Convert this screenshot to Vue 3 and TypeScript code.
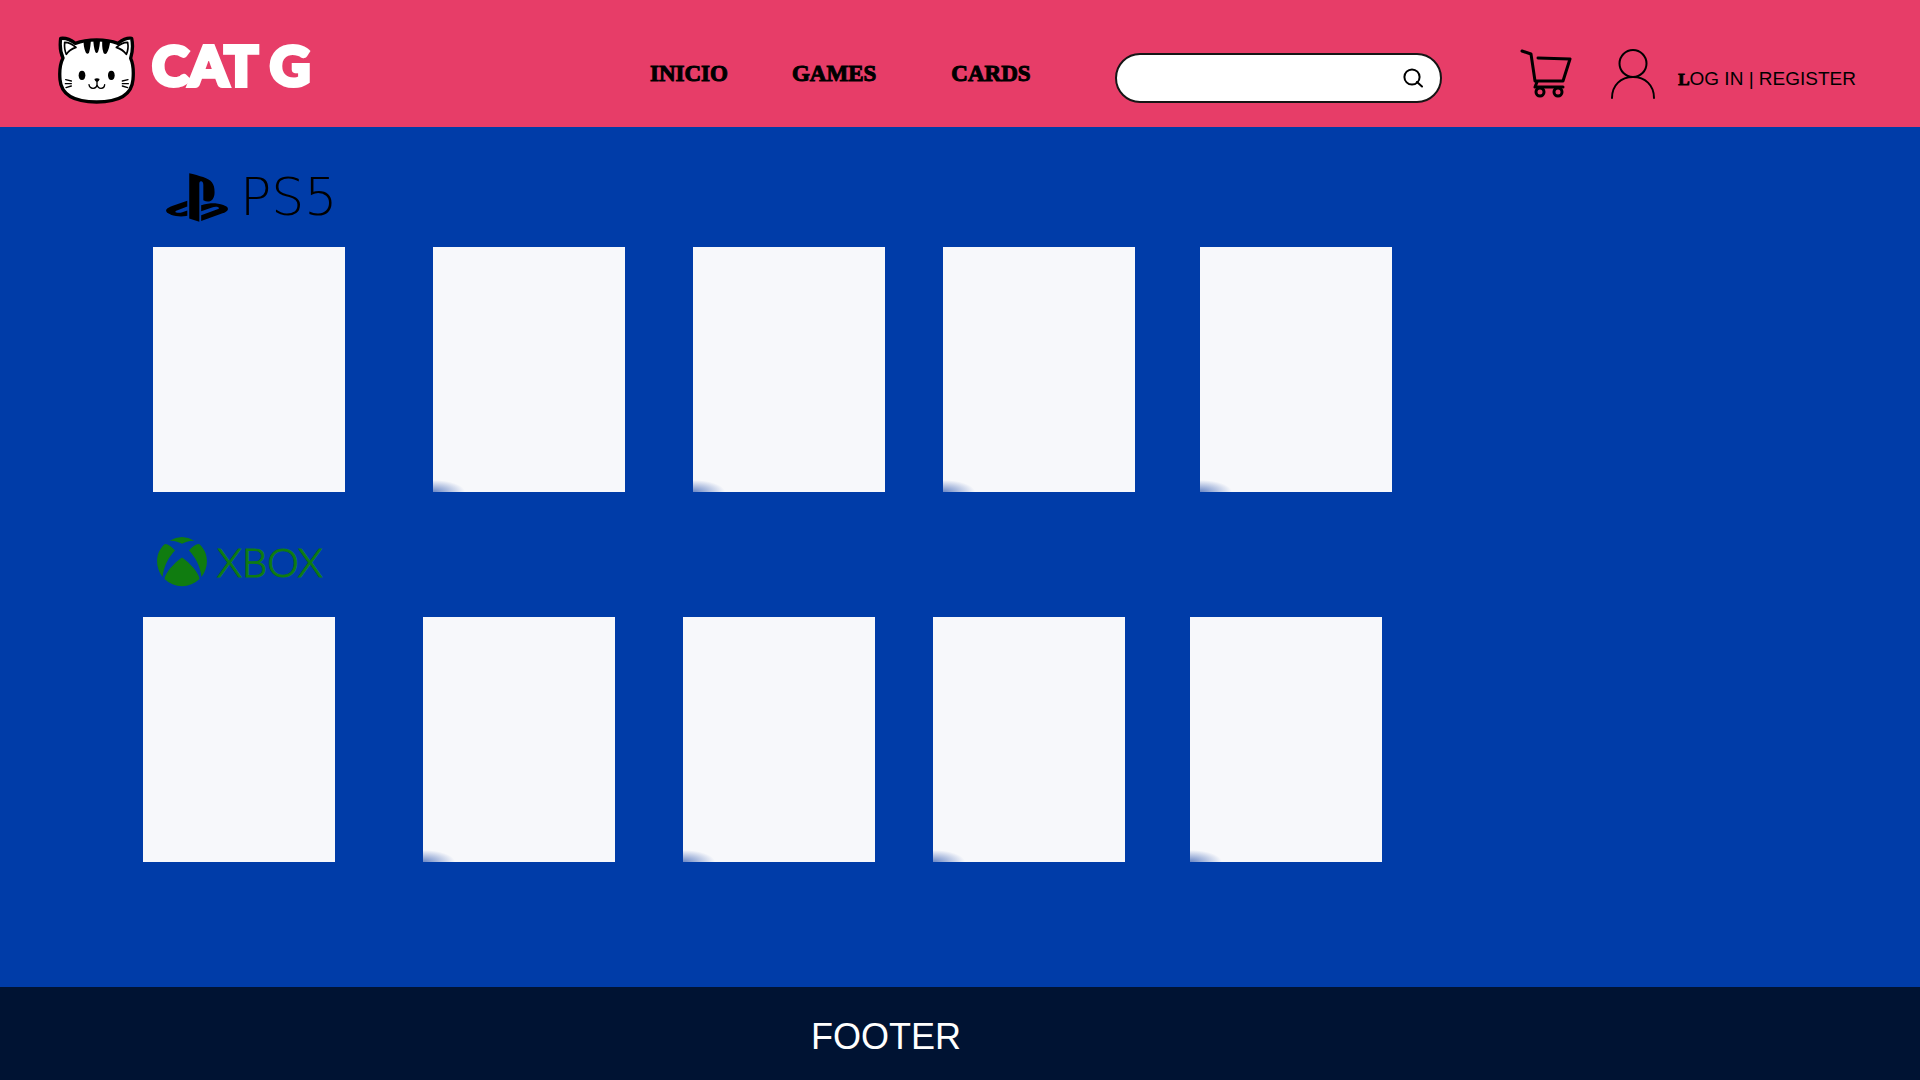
<script setup lang="ts">
import { ref } from 'vue'

interface Shelf {
  id: string
  label: string
  games: number[]
}

const query = ref('')
const links: string[] = ['INICIO', 'GAMES', 'CARDS']
const shelves: Shelf[] = [
  { id: 'ps5', label: 'PS5', games: [1, 2, 3, 4, 5] },
  { id: 'xbox', label: 'XBOX', games: [1, 2, 3, 4, 5] },
]
</script>

<template>
  <div class="page">
    <header class="header">
      <a class="brand" href="#">
        <svg class="cat" viewBox="24 32 234 210" aria-hidden="true">
          <path d="M32 39C48 37 62 43 76 54C112 40 168 40 204 54C218 43 232 37 245 39C250 62 247 82 242 99C249 114 251 140 249 163C245 212 200 230 140 230C80 230 34 212 30 163C28 140 31 114 39 98C31 82 29 62 32 39Z" fill="#fff" stroke="#000" stroke-width="10" stroke-linejoin="round" />
          <path d="M44 51C57 51 68 57 78 66C65 70 55 77 49 87C44 76 43 62 44 51ZM233 51C220 51 209 57 199 66C212 70 222 77 229 87C234 76 235 62 233 51Z" fill="#fff" stroke="#000" stroke-width="5" stroke-linejoin="round" />
          <path d="M101 44L123 42C122 56 121 70 117 82C114 87 109 86 107 81C102 69 100 56 101 44ZM130 42H150C150 56 148 70 144 80C141 84 138 84 136 80C132 70 130 56 130 42ZM157 42L181 46C179 60 176 75 170 84C166 88 161 86 160 81C156 69 156 56 157 42Z" />
          <ellipse cx="96" cy="150" rx="10" ry="14" />
          <ellipse cx="184" cy="150" rx="10" ry="14" />
          <path d="M133 161Q141 157 149 161Q147 168 141 170Q135 168 133 161Z" />
          <path d="M141 168V178M117 178C119 192 139 193 141 178C144 193 163 192 164 178M47 163L64 167M46 175H64M48 187L64 182M234 163L217 167M235 175H217M233 187L217 182" fill="none" stroke="#000" stroke-width="4" stroke-linecap="round" />
        </svg>
        <span class="wordmark">CAT G</span>
      </a>

      <nav class="nav">
        <a v-for="link in links" :key="link" href="#">{{ link }}</a>
      </nav>

      <form class="search" role="search" @submit.prevent>
        <input v-model="query" type="search" aria-label="Search" />
        <button type="submit" aria-label="Search">
          <svg viewBox="0 0 20 20" aria-hidden="true">
            <circle cx="9" cy="9" r="7.6" />
            <path d="M14 14L19 18.5" />
          </svg>
        </button>
      </form>

      <a class="cart" href="#" aria-label="Cart">
        <svg viewBox="0 0 52 50" aria-hidden="true">
          <path d="M2 2L11 5L15 32H43L50 10L18 9M17 33L15 38H43" />
          <circle cx="20" cy="43" r="4" />
          <circle cx="38" cy="43" r="4" />
        </svg>
      </a>
      <a class="user" href="#" aria-label="Account">
        <svg viewBox="0 0 44 50" aria-hidden="true">
          <circle cx="22" cy="14.5" r="13.5" />
          <path d="M1 49C1 36 10 28 22 28S43 36 43 49" />
        </svg>
      </a>
      <a class="login" href="#"><span class="initial">L</span>OG IN | REGISTER</a>
    </header>

    <main class="main">
      <section v-for="shelf in shelves" :key="shelf.id" class="shelf" :class="shelf.id">
        <h2 class="platform">
          <svg v-if="shelf.id === 'ps5'" viewBox="0 2.5 24 19" aria-hidden="true">
            <path d="M8.984 2.596v17.547l3.915 1.261V6.688c0-.69.304-1.151.794-.991.636.18.76.814.76 1.505v5.875c2.441 1.193 4.362-.002 4.362-3.152 0-3.237-1.126-4.675-4.438-5.827-1.307-.448-3.728-1.186-5.39-1.502zm4.656 16.241l6.296-2.275c.715-.258.826-.625.246-.818-.586-.192-1.637-.139-2.357.123l-4.205 1.5V14.98l.24-.085s1.201-.42 2.913-.615c1.696-.18 3.785.03 5.437.661 1.848.601 2.04 1.472 1.576 2.072-.465.6-1.622 1.036-1.622 1.036l-8.544 3.107V18.86zM1.807 18.6c-1.9-.545-2.214-1.668-1.352-2.32.801-.586 2.16-1.052 2.16-1.052l5.615-2.013v2.313L4.205 17c-.705.271-.825.632-.239.826.586.195 1.637.15 2.343-.12L8.247 17v2.074c-.12.03-.256.044-.39.073-1.939.331-3.996.196-6.038-.479z" />
          </svg>
          <svg v-else viewBox="0 0 50 50" aria-hidden="true">
            <path d="M12.5 3.8Q25-3.6 37.5 3.8C33 3.4 28 5 25 6.8C22 5 17 3.4 12.5 3.8Z" />
            <path d="M8 7C11.500 7 15 10 18 13.500C12 20 7 28 5.500 40C-3 29-1 14 8 7Z" />
            <path d="M42 7C38.500 7 35 10 32 13.500C38 20 43 28 44.500 40C53 29 51 14 42 7Z" />
            <path d="M25 20.500C33 26 42 36 42.500 42A25 25 0 0 1 7.500 42C8 36 17 26 25 20.500Z" />
          </svg>
          <span>{{ shelf.label }}</span>
        </h2>
        <ul class="cards">
          <li v-for="game in shelf.games" :key="game" class="card"></li>
        </ul>
      </section>
    </main>

    <footer class="footer">FOOTER</footer>
  </div>
</template>

<style>
body {
  margin: 0;
}
</style>

<style scoped>
.page {
  display: flex;
  flex-direction: column;
  min-height: 100vh;
  background: #003ca8;
  font-family: "Liberation Sans", Arial, sans-serif;
  color: #000;
}

a {
  color: inherit;
  text-decoration: none;
}

svg {
  display: block;
}

.header {
  box-sizing: border-box;
  display: flex;
  align-items: center;
  min-height: 127px;
  padding: 20px 64px 0 58px;
  background: #e73d68;
}

.brand {
  display: flex;
  align-items: center;
  width: 592px;
  padding-bottom: 6px;
}

.cat {
  width: 78px;
  height: 70px;
  margin-right: 16px;
}

.wordmark {
  padding-bottom: 12px;
  font: 900 56px/56px Lato, sans-serif;
  color: #fff;
  -webkit-text-stroke: 4px #fff;
}

.nav {
  display: flex;
  width: 465px;
  font: bold 23px/28px "Liberation Serif", serif;
  -webkit-text-stroke: 1px #000;
}

.nav a {
  margin-right: 64px;
}

.nav a:last-child {
  margin: 0 0 0 11px;
}

.search {
  box-sizing: border-box;
  display: flex;
  flex: 1;
  align-items: center;
  height: 50px;
  margin-top: 8px;
  padding: 0 17px 0 20px;
  border: 2px solid #161616;
  border-radius: 25px;
  background: #fff;
}

.search input {
  flex: 1;
  min-width: 0;
  border: 0;
  outline: 0;
  background: transparent;
  font: 18px/24px "Liberation Sans", Arial, sans-serif;
}

.search button {
  width: 20px;
  height: 20px;
  padding: 0;
  border: 0;
  background: transparent;
}

.search svg,
.cart svg,
.user svg {
  fill: none;
  stroke: #000;
  stroke-width: 2;
  stroke-linecap: round;
  stroke-linejoin: round;
}

.cart svg {
  width: 52px;
  height: 50px;
  margin-left: 78px;
  stroke-width: 3;
}

.user svg {
  width: 44px;
  height: 50px;
  margin: 0 23px 0 39px;
}

.login {
  margin-top: 11px;
  font-size: 19px;
  line-height: 24px;
  white-space: nowrap;
}

.initial {
  font-family: "Liberation Serif", serif;
  font-size: 17px;
  font-weight: bold;
  -webkit-text-stroke: 1px #000;
}

.main {
  flex: 1;
}

.shelf {
  padding-top: 40px;
}

.platform {
  display: flex;
  align-items: center;
  height: 60px;
  margin: 0 0 20px;
  font-weight: normal;
}

.ps5 .platform {
  padding-left: 166px;
  font: 200 52px/60px "DejaVu Sans", sans-serif;
}

.ps5 svg {
  width: 62px;
  height: 49px;
  margin: 0 12px 0 0;
}

.xbox .platform {
  margin-bottom: 25px;
  padding-left: 157px;
  font: 300 40px/58px Lato, sans-serif;
  color: #107c10;
  -webkit-text-stroke: 1px #107c10;
}

.xbox svg {
  width: 50px;
  height: 50px;
  margin-right: 10px;
  fill: #107c10;
}

.cards {
  display: grid;
  grid-template-columns: 280fr 260fr 250fr 257fr 192fr;
  margin: 0 27.5% 0 153px;
  padding: 0;
  list-style: none;
}

.xbox .cards {
  margin: 0 28% 0 143px;
}

.card {
  width: 192px;
  height: 245px;
  background: #f7f8fb;
}

.card:not(:first-child) {
  background: radial-gradient(ellipse 32px 12px at 0 100%, #6a87c5, #f7f8fb);
}

.footer {
  box-sizing: border-box;
  height: 93px;
  padding-right: 148px;
  background: #001333;
  color: #fff;
  font-size: 36px;
  line-height: 100px;
  text-align: center;
}
</style>
